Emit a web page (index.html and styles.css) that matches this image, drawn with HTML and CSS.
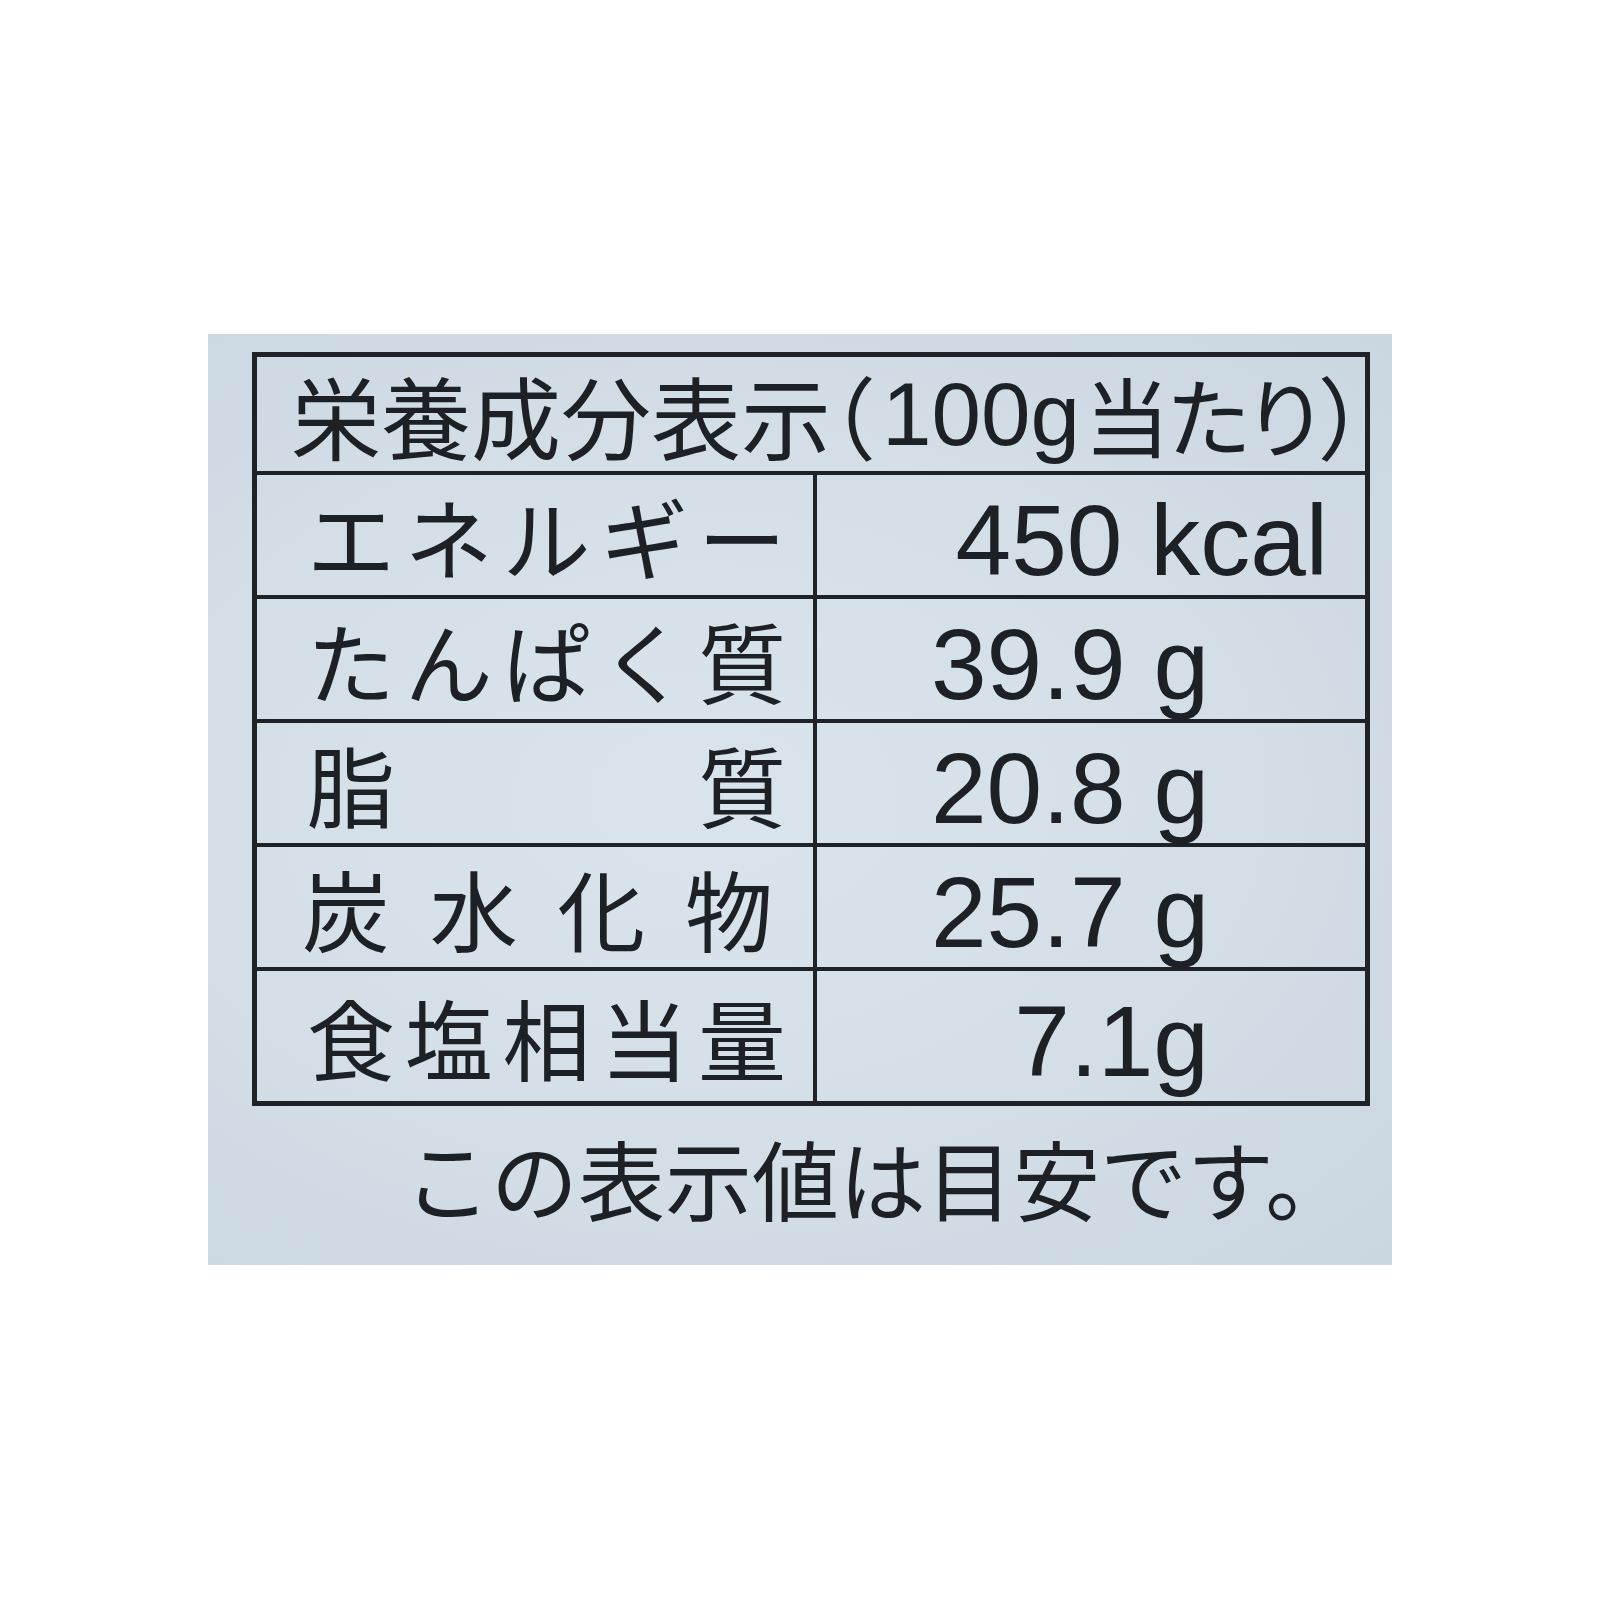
FILE: index.html
```html
<!DOCTYPE html>
<html lang="ja">
<head>
<meta charset="utf-8">
<title>栄養成分表示</title>
<link rel="stylesheet" href="styles.css">
</head>
<body>
<div class="panel">
  <div class="table">
    <div class="head">栄養成分表示<span class="half">（</span><span class="latin">100g</span><span class="prop">当たり</span><span class="half">）</span></div>
    <div class="row">
      <div class="label"><span>エ</span><span>ネ</span><span>ル</span><span>ギ</span><span>ー</span></div>
      <div class="value value-kcal">450 kcal</div>
    </div>
    <div class="row">
      <div class="label"><span>た</span><span>ん</span><span>ぱ</span><span>く</span><span>質</span></div>
      <div class="value">39.9 g</div>
    </div>
    <div class="row">
      <div class="label"><span>脂</span><span>質</span></div>
      <div class="value">20.8 g</div>
    </div>
    <div class="row">
      <div class="label label-wide"><span>炭</span><span>水</span><span>化</span><span>物</span></div>
      <div class="value">25.7 g</div>
    </div>
    <div class="row row-last">
      <div class="label"><span>食</span><span>塩</span><span>相</span><span>当</span><span>量</span></div>
      <div class="value">7.1g</div>
    </div>
  </div>
  <p class="note">この表示値は目安です。</p>
</div>
</body>
</html>
```
FILE: styles.css
```css
html, body {
  margin: 0;
  padding: 0;
  background: #ffffff;
}

body {
  font-family: "Noto Sans CJK JP", "Noto Sans", sans-serif;
  color: #1d2024;
}

.panel {
  box-sizing: border-box;
  margin: 334px 0 0 208px;
  width: 1184px;
  height: 931px;
  padding: 18px 22px 0 44px;
  background: radial-gradient(ellipse at 42% 50%, #dae4ec 0%, #d3dee7 55%, #cad6e0 100%);
}

.table {
  border: 5px solid #1f2226;
  display: flex;
  flex-direction: column;
}

.head {
  box-sizing: border-box;
  height: 118px;
  border-bottom: 4px solid #1f2226;
  display: flex;
  align-items: center;
  padding-left: 34px;
  font-size: 90px;
  line-height: 1;
  white-space: nowrap;
}

.head .half {
  font-feature-settings: "halt";
}

.head .prop {
  font-feature-settings: "palt";
  font-size: 86px;
  letter-spacing: -2px;
}

.head .latin {
  font-family: "Liberation Sans", Arial, sans-serif;
  font-size: 89px;
  padding-left: 6px;
  padding-right: 4px;
}

.row {
  box-sizing: border-box;
  height: 124px;
  border-bottom: 4px solid #1f2226;
  display: flex;
}

.row-last {
  height: 130px;
  border-bottom: none;
}

.label {
  box-sizing: border-box;
  width: 560px;
  border-right: 4px solid #1f2226;
  display: flex;
  justify-content: space-between;
  align-items: center;
  padding: 0 27px 0 50px;
  font-size: 88px;
  line-height: 1;
}

.label-wide {
  padding-left: 45px;
  padding-right: 40px;
}

.value {
  flex: 1;
  display: flex;
  justify-content: flex-end;
  align-items: center;
  padding: 10px 156px 0 0;
  font-family: "Liberation Sans", Arial, sans-serif;
  font-size: 100px;
  line-height: 1;
  white-space: nowrap;
}

.value-kcal {
  padding-right: 37px;
}

.note {
  margin: 28px 0 0 152px;
  font-size: 87px;
  line-height: 1;
  white-space: nowrap;
}
```
